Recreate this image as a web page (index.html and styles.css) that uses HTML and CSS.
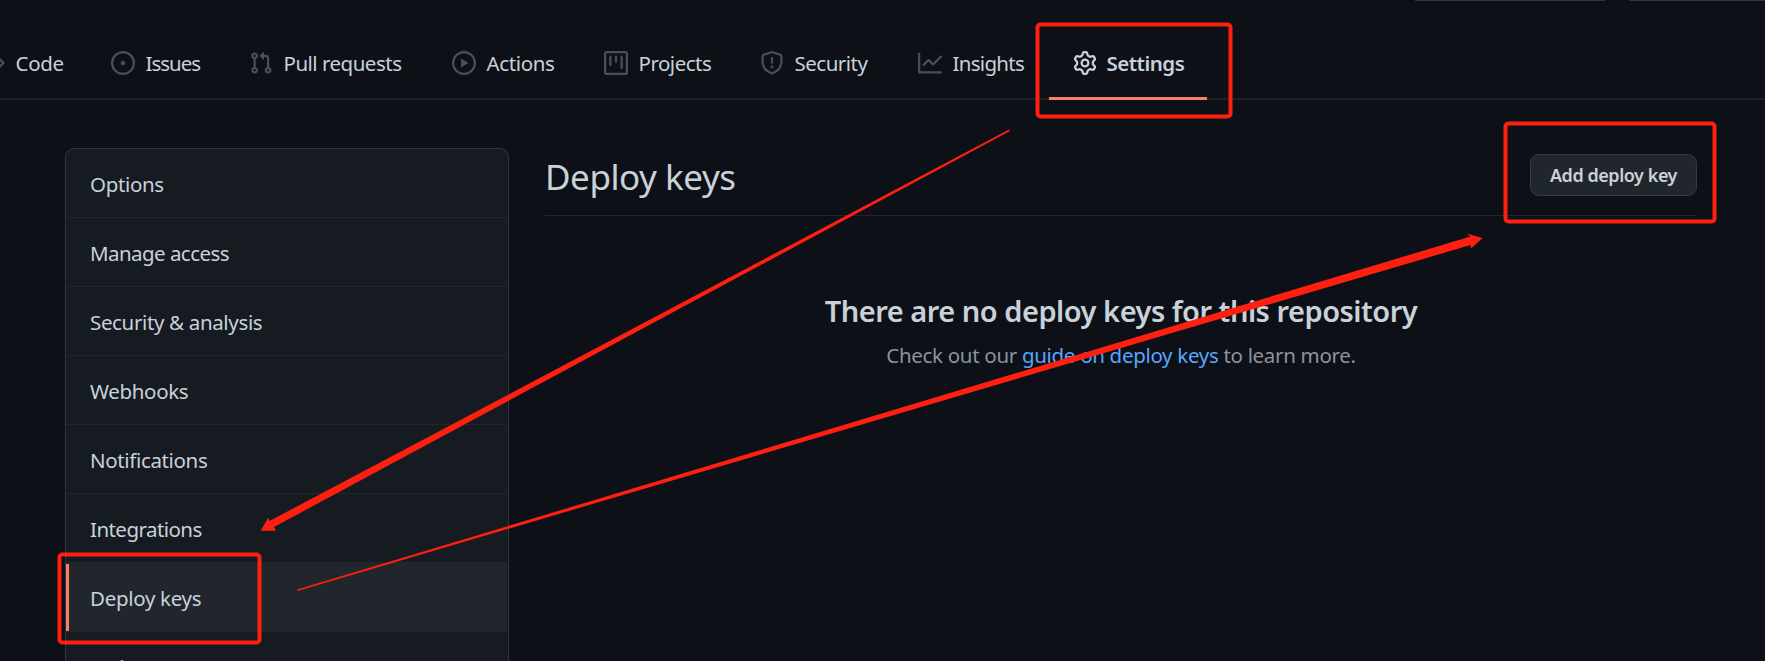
FILE: index.html
```html
<!DOCTYPE html>
<html lang="en">
<head>
<meta charset="utf-8">
<title>Deploy keys</title>
<link rel="stylesheet" href="styles.css">
</head>
<body>
<div class="page">
  <div class="repo-actions"><span class="repo-button star"></span><span class="repo-button fork"></span></div>
  <nav class="tabs">
    <a class="tab code"><svg class="icon" viewBox="0 0 16 16"><path fill-rule="evenodd" d="M4.72 3.22a.75.75 0 011.06 1.06L2.06 8l3.72 3.72a.75.75 0 11-1.06 1.06L.47 8.53a.75.75 0 010-1.06l4.25-4.25zm6.56 0a.75.75 0 10-1.06 1.06L13.94 8l-3.72 3.72a.75.75 0 101.06 1.06l4.25-4.25a.75.75 0 000-1.06l-4.25-4.25z"/></svg><span>Code</span></a>
    <a class="tab issues"><svg class="icon" viewBox="0 0 16 16"><path d="M8 9.5a1.5 1.5 0 100-3 1.5 1.5 0 000 3z"/><path fill-rule="evenodd" d="M8 0a8 8 0 100 16A8 8 0 008 0zM1.5 8a6.5 6.5 0 1113 0 6.5 6.5 0 01-13 0z"/></svg><span>Issues</span></a>
    <a class="tab pulls"><svg class="icon" viewBox="0 0 16 16"><path fill-rule="evenodd" d="M7.177 3.073L9.573.677A.25.25 0 0110 .854v4.792a.25.25 0 01-.427.177L7.177 3.427a.25.25 0 010-.354zM3.75 2.5a.75.75 0 100 1.5.75.75 0 000-1.5zm-2.25.75a2.25 2.25 0 113 2.122v5.256a2.251 2.251 0 11-1.5 0V5.372A2.25 2.25 0 011.5 3.25zM11 2.5h-1V4h1a1 1 0 011 1v5.628a2.251 2.251 0 101.5 0V5A2.5 2.5 0 0011 2.5zm1 10.25a.75.75 0 111.5 0 .75.75 0 01-1.5 0zM3.75 12a.75.75 0 100 1.5.75.75 0 000-1.5z"/></svg><span>Pull requests</span></a>
    <a class="tab actions"><svg class="icon" viewBox="0 0 16 16"><path fill-rule="evenodd" d="M1.5 8a6.5 6.5 0 1113 0 6.5 6.5 0 01-13 0zM8 0a8 8 0 100 16A8 8 0 008 0zM6.379 5.227A.25.25 0 006 5.442v5.117a.25.25 0 00.379.214l4.264-2.559a.25.25 0 000-.428L6.379 5.227z"/></svg><span>Actions</span></a>
    <a class="tab projects"><svg class="icon" viewBox="0 0 16 16"><path fill-rule="evenodd" d="M1.75 0A1.75 1.75 0 000 1.75v12.5C0 15.216.784 16 1.75 16h12.5A1.75 1.75 0 0016 14.25V1.75A1.75 1.75 0 0014.25 0H1.75zM1.5 1.75a.25.25 0 01.25-.25h12.5a.25.25 0 01.25.25v12.5a.25.25 0 01-.25.25H1.75a.25.25 0 01-.25-.25V1.75zM11.75 3a.75.75 0 00-.75.75v7.5a.75.75 0 001.5 0v-7.5a.75.75 0 00-.75-.75zm-8.25.75a.75.75 0 011.5 0v5.5a.75.75 0 01-1.5 0v-5.5zM8 3a.75.75 0 00-.75.75v3.5a.75.75 0 001.5 0v-3.5A.75.75 0 008 3z"/></svg><span>Projects</span></a>
    <a class="tab security"><svg class="icon" viewBox="0 0 16 16"><path fill-rule="evenodd" d="M7.467.133a1.75 1.75 0 011.066 0l5.25 1.68A1.75 1.75 0 0115 3.48V7c0 1.566-.32 3.182-1.303 4.682-.983 1.498-2.585 2.813-5.032 3.855a1.7 1.7 0 01-1.33 0c-2.447-1.042-4.049-2.357-5.032-3.855C1.32 10.182 1 8.566 1 7V3.48a1.75 1.75 0 011.217-1.667l5.25-1.68zm.61 1.429a.25.25 0 00-.153 0l-5.25 1.68a.25.25 0 00-.174.238V7c0 1.358.275 2.666 1.057 3.86.784 1.194 2.121 2.34 4.366 3.297a.2.2 0 00.154 0c2.245-.956 3.582-2.104 4.366-3.298C13.225 9.666 13.5 8.36 13.5 7V3.48a.25.25 0 00-.174-.237l-5.25-1.68zM9 10.5a1 1 0 11-2 0 1 1 0 012 0zm-.25-5.75a.75.75 0 10-1.5 0v3a.75.75 0 001.5 0v-3z"/></svg><span>Security</span></a>
    <a class="tab insights"><svg class="icon" viewBox="0 0 16 16"><path fill-rule="evenodd" d="M1.5 1.75a.75.75 0 00-1.5 0v12.5c0 .414.336.75.75.75h14.5a.75.75 0 000-1.5H1.5V1.75zm14.28 2.53a.75.75 0 00-1.06-1.06L10 7.94 7.53 5.47a.75.75 0 00-1.06 0L3.22 8.72a.75.75 0 001.06 1.06L7 7.06l2.47 2.47a.75.75 0 001.06 0l5.25-5.25z"/></svg><span>Insights</span></a>
    <a class="tab settings"><svg class="icon" viewBox="0 0 16 16"><path fill-rule="evenodd" d="M7.429 1.525a6.593 6.593 0 011.142 0c.036.003.108.036.137.146l.289 1.105c.147.56.55.967.997 1.189.174.086.341.183.501.29.417.278.97.423 1.53.27l1.102-.303c.11-.03.175.016.195.046.219.31.41.641.573.989.014.031.022.11-.059.19l-.815.806c-.411.406-.562.957-.53 1.456a4.588 4.588 0 010 .582c-.032.499.119 1.05.53 1.456l.815.806c.08.08.073.159.059.19a6.494 6.494 0 01-.573.99c-.02.029-.086.074-.195.045l-1.103-.303c-.559-.153-1.112-.008-1.529.27-.16.107-.327.204-.5.29-.449.222-.851.628-.998 1.189l-.289 1.105c-.029.11-.101.143-.137.146a6.613 6.613 0 01-1.142 0c-.036-.003-.108-.037-.137-.146l-.289-1.105c-.147-.56-.55-.967-.997-1.189a4.502 4.502 0 01-.501-.29c-.417-.278-.97-.423-1.53-.27l-1.102.303c-.11.03-.175-.016-.195-.046a6.492 6.492 0 01-.573-.989c-.014-.031-.022-.11.059-.19l.815-.806c.411-.406.562-.957.53-1.456a4.587 4.587 0 010-.582c.032-.499-.119-1.05-.53-1.456l-.815-.806c-.08-.08-.073-.159-.059-.19a6.44 6.44 0 01.573-.99c.02-.029.086-.075.195-.045l1.103.303c.559.153 1.112.008 1.529-.27.16-.107.327-.204.5-.29.449-.222.851-.628.998-1.189l.289-1.105c.029-.11.101-.143.137-.146zM8 0c-.236 0-.47.01-.701.03-.743.065-1.29.615-1.458 1.261l-.29 1.106c-.017.066-.078.158-.211.224a5.994 5.994 0 00-.668.386c-.123.082-.233.09-.3.071L3.27 2.776c-.644-.177-1.392.02-1.82.63a7.977 7.977 0 00-.704 1.217c-.315.675-.111 1.422.363 1.891l.815.806c.05.048.098.147.088.294a6.084 6.084 0 000 .772c.01.147-.038.246-.088.294l-.815.806c-.474.469-.678 1.216-.363 1.891.2.428.436.835.704 1.218.428.609 1.176.806 1.82.63l1.103-.303c.066-.019.176-.011.299.071.213.143.436.272.668.386.133.066.194.158.212.224l.289 1.106c.169.646.715 1.196 1.458 1.26a8.094 8.094 0 001.402 0c.743-.064 1.29-.614 1.458-1.26l.29-1.106c.017-.066.078-.158.211-.224a5.98 5.98 0 00.668-.386c.123-.082.233-.09.3-.071l1.102.302c.644.177 1.392-.02 1.82-.63.268-.382.505-.789.704-1.217.315-.675.111-1.422-.364-1.891l-.814-.806c-.05-.048-.098-.147-.088-.294a6.1 6.1 0 000-.772c-.01-.147.039-.246.088-.294l.814-.806c.475-.469.679-1.216.364-1.891a7.992 7.992 0 00-.704-1.218c-.428-.609-1.176-.806-1.82-.63l-1.103.303c-.066.019-.176.011-.299-.071a5.991 5.991 0 00-.668-.386c-.133-.066-.194-.158-.212-.224L10.16 1.29C9.99.645 9.444.095 8.701.031A8.094 8.094 0 008 0zm1.5 8a1.5 1.5 0 11-3 0 1.5 1.5 0 013 0zM11 8a3 3 0 11-6 0 3 3 0 016 0z"/></svg><span>Settings</span></a>
  </nav>
  <div class="layout">
    <aside class="menu">
      <a class="menu-item">Options</a>
      <a class="menu-item wide">Manage access</a>
      <a class="menu-item">Security &amp; analysis</a>
      <a class="menu-item">Webhooks</a>
      <a class="menu-item">Notifications</a>
      <a class="menu-item wide">Integrations</a>
      <a class="menu-item selected">Deploy keys</a>
      <a class="menu-item">Actions</a>
    </aside>
    <main class="content">
      <header class="subhead">
        <h1>Deploy keys</h1>
        <button class="add-key">Add deploy key</button>
      </header>
      <section class="blank">
        <h2>There are no deploy keys for this repository</h2>
        <p>Check out our <a>guide on deploy keys</a> to learn more.</p>
      </section>
    </main>
  </div>
  <svg class="marks" viewBox="0 0 1765 661">
    <g class="frame">
      <rect x="1037.5" y="24.5" width="193" height="92" rx="3"/>
      <rect x="1505.500" y="123.500" width="209" height="98" rx="3"/>
      <rect x="59.500" y="554.500" width="200" height="88" rx="3"/>
    </g>
    <path d="M1009 129.500L1010 131L274 527L276 530.800L260.500 530.800L268.500 517.500L269.500 521Z"/>
    <path d="M297 589.500L1470.500 236.500L1466.500 233.500L1482.500 238L1471 248.500L1470.500 245L297.500 591Z"/>
  </svg>
</div>
</body>
</html>
```

FILE: styles.css
```css
* { box-sizing: border-box; }
body { margin: 0; background: #0d1117; color: #c9d1d9; font: 20.5px/30px "Noto Sans", "Open Sans", sans-serif; }
.page { position: relative; width: 1765px; height: 661px; overflow: hidden; }
.repo-actions { height: 1px; display: flex; gap: 24px; padding-left: 1415px; }
.repo-button { height: 1px; background: #30363d; }
.star { width: 190px; }
.fork { width: 136px; }
.tabs { height: 99px; display: flex; border-bottom: 2px solid #1b2027; padding-top: 26px; }
.tab { display: flex; flex: none; gap: 10.5px; height: 73px; padding: 24px 0 0 24px; white-space: nowrap; letter-spacing: -.5px; }
.icon { width: 24px; height: 24px; flex: none; fill: #484f58; }
.tab span { margin-top: -3px; }
.code { width: 130px; margin-left: -43px; letter-spacing: -.3px; }
.issues { width: 138px; letter-spacing: -1px; }
.pulls { width: 203px; }
.actions { width: 152px; letter-spacing: -.35px; }
.projects { width: 156px; }
.security { width: 158px; }
.insights { width: 155px; letter-spacing: -.7px; }
.settings { width: 158px; gap: 9.5px; font-weight: 600; border-bottom: 3px solid #f78166; }
.settings .icon { fill: #c9d1d9; }
.layout { display: flex; gap: 36px; padding: 48px 68px 0 65px; }
.menu { width: 444px; flex: none; height: 540px; border: 1px solid #30363d; border-radius: 9px; background: #161b22; }
.menu-item { display: flex; align-items: center; height: 69px; padding: 2px 0 0 24px; margin-right: 1px; border-bottom: 1px solid #21262d; letter-spacing: -.35px; }
.menu-item.wide { letter-spacing: -.55px; }
.menu-item.selected { padding-top: 1px; background: linear-gradient(#f78166, #f78166) 0 1px / 3px 67px no-repeat #21262d; letter-spacing: -.3px; }
.content { flex: 1; }
.subhead { height: 68px; display: flex; justify-content: space-between; border-bottom: 1px solid #21262d; }
h1 { margin: 4px 0 0; font-weight: 400; font-size: 35px; line-height: 50px; letter-spacing: -.45px; }
.add-key { margin: 6px 0 0; width: 167px; height: 42px; padding: 0; border: 1px solid #363b42; border-radius: 9px; background: #21262d; color: #c9d1d9; font: 600 18px/28px "Noto Sans", sans-serif; letter-spacing: -.45px; white-space: nowrap; }
.blank { padding-top: 75px; text-align: center; white-space: nowrap; }
h2 { margin: 0; font-size: 29px; line-height: 40px; font-weight: 600; letter-spacing: -.49px; }
p { margin: 9px 0 0; color: #8b949e; letter-spacing: -.31px; }
p a { color: #58a6ff; }
.marks { position: absolute; left: 0; top: 0; width: 1765px; height: 661px; fill: #ff1f10; }
.frame { fill: none; stroke: #ff1f10; stroke-width: 4; }
```
